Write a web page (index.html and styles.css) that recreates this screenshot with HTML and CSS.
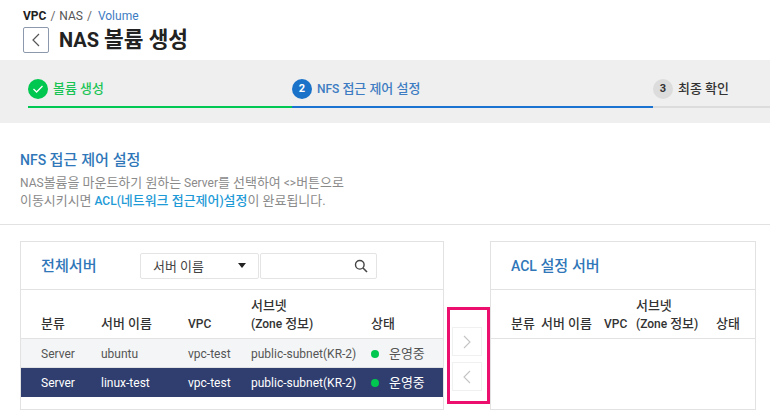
FILE: index.html
```html
<!DOCTYPE html>
<html lang="ko">
<head>
    <meta charset="UTF-8">
    <title>NAS 볼륨 생성</title>
    <link rel="stylesheet" href="styles.css">
</head>
<body>
    <header class="page-head">
        <div class="crumbs"><b>VPC</b> <i>/</i> NAS <i>/</i> <span class="crumb-now">Volume</span></div>
        <div class="title-row">
            <button class="back-btn">
                <svg width="10" height="14" viewBox="0 0 10 14"><path d="M8 1 2 7l6 6" fill="none" stroke="#555" stroke-width="1.2"/></svg>
            </button>
            <h1>NAS <span class="ko">볼륨 생성</span></h1>
        </div>
    </header>

    <nav class="steps">
        <div class="step step-done">
            <span class="step-num">
                <svg width="12" height="10" viewBox="0 0 12 10"><path d="M1.5 5 4.6 8 10.5 2" fill="none" stroke="#fff" stroke-width="1.3"/></svg>
            </span>
            <span class="ko">볼륨 생성</span>
        </div>
        <div class="step step-now"><span class="step-num">2</span><span>NFS <span class="ko">접근 제어 설정</span></span></div>
        <div class="step step-next"><span class="step-num">3</span><span class="ko">최종 확인</span></div>
    </nav>

    <section class="intro">
        <h2>NFS <span class="ko">접근 제어 설정</span></h2>
        <p>NAS<span class="ko">볼륨을 마운트하기 원하는</span> Server<span class="ko">를 선택하여</span> &lt;&gt;<span class="ko">버튼으로</span><br><span class="ko">이동시키시면</span> <strong>ACL(<span class="ko">네트워크 접근제어</span>)<span class="ko">설정</span></strong><span class="ko">이 완료됩니다.</span></p>
    </section>

    <main class="columns">
        <div class="panel panel-all">
            <div class="panel-head">
                <h3><span class="ko">전체서버</span></h3>
                <div class="filter">
                    <div class="filter-select"><span class="ko">서버 이름</span><span class="caret"></span></div>
                    <div class="filter-input">
                        <svg width="14" height="14" viewBox="0 0 14 14"><circle cx="5.8" cy="5.8" r="4.3" fill="none" stroke="#444" stroke-width="1.4"/><path d="m9 9 4 4" stroke="#444" stroke-width="1.6"/></svg>
                    </div>
                </div>
            </div>
            <table class="server-table">
                <thead>
                    <tr><th class="c1"><span class="ko">분류</span></th><th class="c2"><span class="ko">서버 이름</span></th><th class="c3">VPC</th><th class="c4"><span class="ko">서브넷</span><br>(Zone <span class="ko">정보</span>)</th><th><span class="ko">상태</span></th></tr>
                </thead>
                <tbody>
                    <tr><td class="c1">Server</td><td class="c2">ubuntu</td><td class="c3">vpc-test</td><td class="c4">public-subnet(KR-2)</td><td><span class="dot"></span><span class="ko">운영중</span></td></tr>
                    <tr class="selected"><td class="c1">Server</td><td class="c2">linux-test</td><td class="c3">vpc-test</td><td class="c4">public-subnet(KR-2)</td><td><span class="dot"></span><span class="ko">운영중</span></td></tr>
                </tbody>
            </table>
        </div>

        <div class="move-box">
            <button class="move-btn">
                <svg width="10" height="14" viewBox="0 0 10 14"><path d="M2 1 8 7l-6 6" fill="none" stroke="#c4c4c4" stroke-width="1.1"/></svg>
            </button>
            <button class="move-btn">
                <svg width="10" height="14" viewBox="0 0 10 14"><path d="M8 1 2 7l6 6" fill="none" stroke="#c4c4c4" stroke-width="1.1"/></svg>
            </button>
        </div>

        <div class="panel panel-acl">
            <div class="panel-head">
                <h3>ACL <span class="ko">설정 서버</span></h3>
            </div>
            <table class="server-table">
                <thead>
                    <tr><th class="a1"><span class="ko">분류</span></th><th class="a2"><span class="ko">서버 이름</span></th><th class="a3">VPC</th><th class="a4"><span class="ko">서브넷</span><br>(Zone <span class="ko">정보</span>)</th><th><span class="ko">상태</span></th></tr>
                </thead>
            </table>
        </div>
    </main>
</body>
</html>
```

FILE: styles.css
```css
* {
    box-sizing: border-box;
}

html, body {
    height: 420px;
    overflow: hidden;
}

body {
    margin: 0;
    font-family: Roboto, "Noto Sans CJK KR", sans-serif;
    font-size: 12px;
    color: #333;
    background-color: #fff;
}

/* korean runs come out narrower than the latin next to them */
.ko {
    font-size: 1.08em;
}

.page-head {
    height: 60px;
    padding: 8px 23px 0;
}

.crumbs {
    height: 16px;
    line-height: 16px;
    font-size: 12px;
    color: #555;
}

.crumbs b {
    color: #222;
    font-weight: 700;
}

.crumbs i {
    font-style: normal;
    color: #666;
    margin: 0 1px;
}

.crumb-now {
    color: #3d7cc2;
    margin-left: 2px;
}

.title-row {
    display: flex;
    align-items: center;
    gap: 10px;
    margin-top: 3px;
}

.back-btn {
    width: 26px;
    height: 26px;
    padding: 0;
    display: flex;
    align-items: center;
    justify-content: center;
    background-color: #fff;
    border: 1px solid #8c99ad;
    border-radius: 2px;
}

h1 {
    margin: 0;
    font-size: 20px;
    line-height: 26px;
    font-weight: 700;
    color: #222;
}

h1 .ko {
    font-size: 1.07em;
}

.steps {
    display: flex;
    height: 63px;
    padding: 19px 0 0 28px;
    background-color: #efefef;
}

.step {
    height: 29px;
    display: flex;
    align-items: flex-start;
    gap: 5px;
    font-size: 12px;
    font-weight: 500;
    line-height: 20px;
    border-bottom: 2px solid;
}

.step-num {
    width: 20px;
    height: 20px;
    flex: none;
    display: flex;
    align-items: center;
    justify-content: center;
    border-radius: 50%;
    color: #fff;
    font-size: 11px;
    font-weight: 700;
}

.step-done {
    width: 264px;
    color: #19c455;
    border-color: #00c853;
}

.step-done .step-num {
    background-color: #00c74f;
}

.step-now {
    width: 361px;
    color: #3d7cc2;
    border-color: #1a73d1;
}

.step-now .step-num {
    background-color: #1a73c9;
}

.step-next {
    flex: 1;
    color: #333;
    border-color: #dcdcdc;
}

.step-next .step-num {
    background-color: #dcdcdc;
    color: #333;
}

.intro {
    height: 102px;
    padding: 27px 20px 0;
    border-bottom: 1px solid #e2e2e2;
}

h2 {
    margin: 0;
    font-size: 14px;
    line-height: 20px;
    font-weight: 500;
    color: #2f77b8;
}

.intro p {
    margin: 4px 0 0;
    font-size: 12px;
    line-height: 18px;
    color: #8a8a8a;
}

.intro strong {
    font-weight: 500;
    color: #1e9ad6;
}

.columns {
    display: flex;
    align-items: flex-start;
    padding: 16px 0 0 20px;
}

.panel {
    height: 169px;
    border: 1px solid #e2e2e2;
}

.panel-all {
    width: 424px;
}

.panel-acl {
    width: 266px;
}

.panel-head {
    height: 48px;
    display: flex;
    align-items: center;
    padding-left: 20px;
    border-bottom: 1px solid #e2e2e2;
}

h3 {
    margin: 0 0 4px;
    font-size: 14px;
    font-weight: 500;
    color: #2f77b8;
}

.panel-all h3 {
    width: 99px;
}

.filter {
    display: flex;
    gap: 1px;
}

.filter-select,
.filter-input {
    height: 26px;
    display: flex;
    align-items: center;
    border: 1px solid #e4e4e4;
    border-radius: 2px;
}

.filter-select {
    width: 119px;
    justify-content: space-between;
    padding: 0 12px;
    font-size: 12px;
    color: #444;
}

.caret {
    width: 0;
    height: 0;
    border: 4px solid transparent;
    border-top: 5px solid #222;
    border-bottom: 0;
}

.filter-input {
    width: 117px;
    justify-content: flex-end;
    padding-right: 8px;
}

.server-table {
    width: 100%;
    border-collapse: collapse;
    table-layout: fixed;
}

.server-table th {
    height: 48px;
    padding: 0 0 5px;
    text-align: left;
    vertical-align: bottom;
    font-size: 12px;
    line-height: 18px;
    font-weight: 500;
    color: #333;
    border-bottom: 1px solid #e2e2e2;
}

.server-table td {
    height: 29px;
    padding: 2px 0 0;
    font-size: 12px;
    line-height: 16px;
    color: #555;
    white-space: nowrap;
    background-color: #f4f5f7;
    border-bottom: 1px solid #e2e2e2;
}

.server-table .selected td {
    height: 30px;
    color: #fff;
    background-color: #2f3e6e;
    border-bottom: 0;
}

.c1 { width: 80px; padding-left: 20px !important; }
.c2 { width: 87px; }
.c3 { width: 63px; }
.c4 { width: 120px; }

.a1 { width: 50px; padding-left: 20px !important; }
.a2 { width: 63px; }
.a3 { width: 32px; }
.a4 { width: 80px; }

.dot {
    display: inline-block;
    width: 8px;
    height: 8px;
    margin-right: 10px;
    border-radius: 50%;
    background-color: #00c74f;
}

.move-box {
    width: 43px;
    height: 97px;
    margin: 66px 0 0 3px;
    padding: 17px 0 0 2px;
    border: 3px solid #ed0f6e;
}

.move-btn {
    width: 30px;
    height: 29px;
    padding: 0;
    display: flex;
    align-items: center;
    justify-content: center;
    background-color: #fff;
    border: 1px solid #f0f0f0;
    margin-bottom: 6px;
}
```
